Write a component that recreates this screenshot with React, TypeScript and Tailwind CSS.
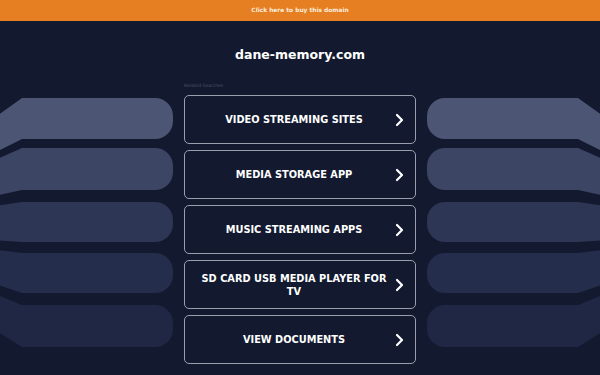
import React from "react";

const searches = [
  "VIDEO STREAMING SITES",
  "MEDIA STORAGE APP",
  "MUSIC STREAMING APPS",
  "SD CARD USB MEDIA PLAYER FOR TV",
  "VIEW DOCUMENTS",
];

// side "shelves" drawn in perspective toward the middle of the page
const shelves = [
  { top: 98, bottom: 139, fill: "#4c5674" },
  { top: 148, bottom: 190, fill: "#3c4664" },
  { top: 202, bottom: 242, fill: "#2d3654" },
  { top: 253, bottom: 293, fill: "#242d4b" },
  { top: 305, bottom: 347, fill: "#1f2745" },
];

function shelfPath(top: number, bottom: number) {
  const r = 18;
  const edge = (y: number) => 230 + (y - 230) * 0.88;
  return `M0 ${edge(top)} L22 ${top} L${173 - r} ${top} A${r} ${r} 0 0 1 173 ${top + r} L173 ${bottom - r} A${r} ${r} 0 0 1 ${173 - r} ${bottom} L22 ${bottom} L0 ${edge(bottom)} Z`;
}

function Shelves({ flip }: { flip?: boolean }) {
  return (
    <svg
      width="173"
      height="280"
      viewBox="0 95 173 280"
      className={flip ? "block -scale-x-100" : "block"}
    >
      {shelves.map((s, i) => (
        <path key={i} d={shelfPath(s.top, s.bottom)} fill={s.fill} />
      ))}
    </svg>
  );
}

function Chevron() {
  return (
    <svg width="9" height="14" viewBox="0 0 9 14" className="shrink-0">
      <path
        d="M2 2 L7 7 L2 12"
        fill="none"
        stroke="#ffffff"
        strokeWidth="2.2"
        strokeLinecap="round"
        strokeLinejoin="round"
      />
    </svg>
  );
}

export default function App() {
  return (
    <div
      className="w-[600px] h-[375px] overflow-hidden bg-[#131a30] text-white"
      style={{ fontFamily: '"DejaVu Sans", Verdana, sans-serif' }}
    >
      <div className="h-[21px] bg-[#e67e22] flex items-center justify-center">
        <span className="text-[5.9px] font-bold text-[#fdeedd]">
          Click here to buy this domain
        </span>
      </div>

      <h1 className="pt-[26px] text-center text-[12.5px] leading-[16px] font-bold">
        dane-memory.com
      </h1>

      <div className="w-[232px] mx-auto mt-[20px] h-[6px] text-[4.5px] leading-[6px] text-[#4a5169]">
        Related Searches
      </div>

      <div className="mt-[6px] flex justify-center">
        <div className="w-[184px] pr-[11px]">
          <Shelves />
        </div>
        <div className="w-[232px] flex flex-col gap-[6px]">
          {searches.map((label) => (
            <div
              key={label}
              className="h-[49px] rounded-[5px] border-[1.5px] border-[#9a9fae] flex items-center pl-[12px] pr-[11px]"
            >
              <span className="flex-1 text-center text-[9.8px] leading-[13px] font-bold pr-[4px]">
                {label}
              </span>
              <Chevron />
            </div>
          ))}
        </div>
        <div className="w-[184px] pl-[11px]">
          <Shelves flip />
        </div>
      </div>
    </div>
  );
}
